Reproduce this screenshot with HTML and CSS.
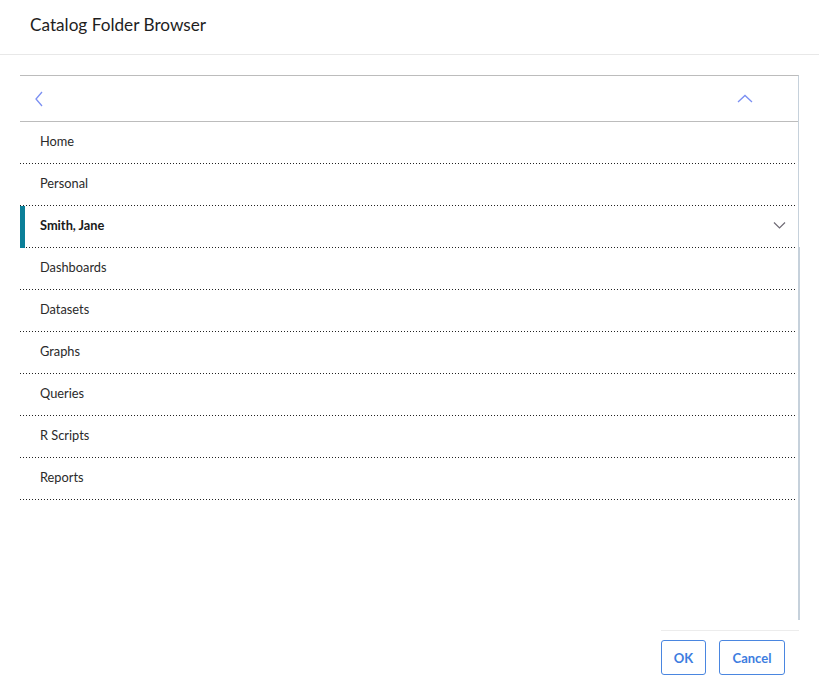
FILE: index.html
```html
<!DOCTYPE html>
<html>
<head>
<meta charset="utf-8">
<link rel="stylesheet" href="styles.css">
</head>
<body>
<div class="dialog">
  <div class="header"><h1 class="title">Catalog Folder Browser</h1></div>
  <div class="content">
    <div class="panel">
      <div class="nav">
        <svg class="back" width="10" height="16" viewBox="0 0 10 16"><path d="M8 1 L2 8 L8 15" fill="none" stroke="#7b8ff2" stroke-width="1.3"/></svg>
        <svg class="up" width="16" height="10" viewBox="0 0 16 10"><path d="M1 8 L8 1.5 L15 8" fill="none" stroke="#7b8ff2" stroke-width="1.3"/></svg>
      </div>
      <ul class="list">
        <li class="row">Home</li>
        <li class="row">Personal</li>
        <li class="row selected"><span>Smith, Jane</span>
          <svg class="down" width="13" height="9" viewBox="0 0 13 9"><path d="M1 1.5 L6.5 7 L12 1.5" fill="none" stroke="#6e6a74" stroke-width="1.2"/></svg>
        </li>
        <li class="row">Dashboards</li>
        <li class="row">Datasets</li>
        <li class="row">Graphs</li>
        <li class="row">Queries</li>
        <li class="row">R Scripts</li>
        <li class="row">Reports</li>
      </ul>
    </div>
    <div class="footer">
      <button class="btn">OK</button>
      <button class="btn">Cancel</button>
    </div>
  </div>
</div>
</body>
</html>
```
FILE: styles.css
```css
html, body {
  margin: 0;
  padding: 0;
  background: #fff;
  font-family: Lato, "Noto Sans", sans-serif;
  color: #222;
}
.header {
  height: 54px;
  border-bottom: 1px solid #e8e8e8;
  display: flex;
  align-items: center;
  padding-left: 30px;
}
.title {
  margin: 0;
  font-size: 17.2px;
  font-weight: 400;
  color: #1e1e1e;
  position: relative;
  top: -3px;
}
.content {
  padding: 20px 20px 0 20px;
}
.panel {
  width: 778px;
  height: 544px;
  border-top: 1px solid #bcbcbc;
  border-right: 1px solid #c6d1db;
  position: relative;
}
.panel::after {
  content: "";
  position: absolute;
  right: -2px;
  top: 171px;
  bottom: 0;
  width: 2px;
  background: #c6d1db;
}
.nav {
  height: 45px;
  border-bottom: 1px solid #bcbcbc;
  display: flex;
  align-items: center;
  justify-content: space-between;
  padding: 0 45px 0 14px;
}
.list {
  list-style: none;
  margin: 0;
  padding: 0;
}
.row {
  height: 38px;
  display: flex;
  align-items: center;
  justify-content: space-between;
  padding: 0 11px 4px 20px;
  font-size: 12.8px;
  color: #2a2a2a;
  background-image: linear-gradient(to right, #222 1px, transparent 1px);
  background-size: 3px 1px;
  background-repeat: repeat-x;
  background-position: left bottom;
  margin-right: 1px;
}
.row.selected {
  font-weight: 700;
  color: #1a1a1a;
  box-shadow: inset 5px 0 0 #0b7f98;
}
.down { margin-top: 1px; }
.footer {
  width: 138px;
  margin-left: auto;
  margin-right: 0;
  margin-top: 10px;
  border-top: 1px solid #ececec;
  padding-top: 9px;
  display: flex;
  gap: 13px;
}
.btn {
  height: 35px;
  padding: 0;
  border: 1px solid #4a86e0;
  border-radius: 3px;
  background: #fff;
  color: #3d7de0;
  font-family: Lato, "Noto Sans", sans-serif;
  font-weight: 700;
  font-size: 13px;
}
.btn:first-child { width: 45px; }
.btn:last-child { width: 66px; }
```
